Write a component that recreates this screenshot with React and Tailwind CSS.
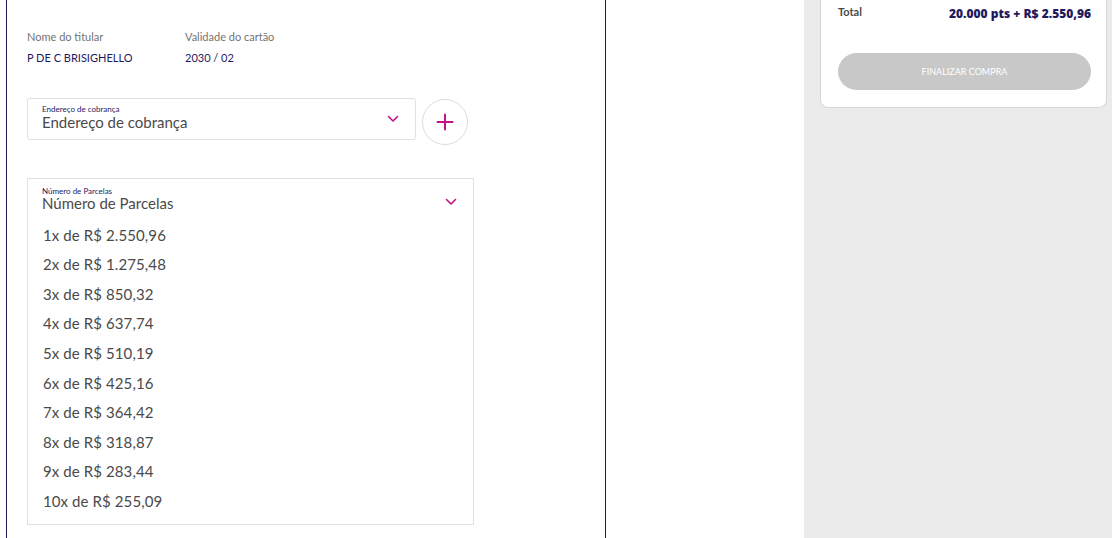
import React from 'react';

const parcelas = [
  '1x de R$ 2.550,96',
  '2x de R$ 1.275,48',
  '3x de R$ 850,32',
  '4x de R$ 637,74',
  '5x de R$ 510,19',
  '6x de R$ 425,16',
  '7x de R$ 364,42',
  '8x de R$ 318,87',
  '9x de R$ 283,44',
  '10x de R$ 255,09',
];

const Chevron = () => (
  <svg width="12" height="8" viewBox="0 0 12 8" fill="none">
    <path d="M1.5 1.5 L6 6 L10.5 1.5" stroke="#c2128a" strokeWidth="1.6" strokeLinecap="round" strokeLinejoin="round" />
  </svg>
);

const App = () => {
  return (
    <div className="flex h-[538px] w-[1112px] overflow-hidden bg-white font-['Lato','Open_Sans',sans-serif]">
      {/* Formulário de pagamento */}
      <div className="pl-[6px]">
        <div className="h-full w-[600px] border-x border-[#1e1a4d] pl-[20px] pt-[29px]">
          <div className="flex text-[11px] leading-[16px]">
            <div className="w-[158px]">
              <div className="text-[#737373]">Nome do titular</div>
              <div className="mt-[5px] text-[#1f1a5e]">P DE C BRISIGHELLO</div>
            </div>
            <div>
              <div className="text-[#737373]">Validade do cartão</div>
              <div className="mt-[5px] text-[#1f1a5e]">2030 / 02</div>
            </div>
          </div>

          <div className="mt-[32px] flex items-start gap-[6px]">
            <div className="flex h-[42px] w-[389px] items-center justify-between rounded-[3px] border border-[#e1e1e1] pl-[14px] pr-[16px]">
              <div className="-mt-[2px]">
                <div className="text-[8px] leading-[9px] text-[#1f1a5e]">Endereço de cobrança</div>
                <div className="text-[15px] leading-[17px] text-[#4a4a4a]">Endereço de cobrança</div>
              </div>
              <Chevron />
            </div>
            <div className="mt-[1px] flex h-[46px] w-[46px] items-center justify-center rounded-full border border-[#dcdcdc]">
              <svg width="18" height="18" viewBox="0 0 18 18">
                <path d="M9 1.5 V16.5 M1.5 9 H16.5" stroke="#c2128a" strokeWidth="2" strokeLinecap="round" />
              </svg>
            </div>
          </div>

          <div className="mt-[33px] w-[447px] border border-[#e1e1e1] pb-[8px]">
            <div className="flex items-center justify-between pl-[14px] pr-[16px] pt-[8px]">
              <div>
                <div className="text-[8px] leading-[9px] text-[#1f1a5e]">Número de Parcelas</div>
                <div className="-mt-[1px] text-[15px] leading-[16px] text-[#4a4a4a]">Número de Parcelas</div>
              </div>
              <div className="mt-[6px]">
                <Chevron />
              </div>
            </div>
            <ul className="mt-[9px] pl-[15px]">
              {parcelas.map((p) => (
                <li key={p} className="flex h-[29.6px] items-center text-[15px] tracking-[0.1px] text-[#4a4a4a]">
                  {p}
                </li>
              ))}
            </ul>
          </div>
        </div>
      </div>

      <div className="flex-1" />

      {/* Resumo */}
      <div className="w-[308px] bg-[#ebebeb] pl-[16px]">
        <div className="w-[287px] rounded-b-[8px] border border-t-0 border-[#d6d6d6] bg-white pb-[17px] pl-[17px] pr-[15px] pt-[4px]">
          <div className="flex items-start justify-between">
            <span className="text-[11px] font-bold text-[#4a4a4a]">Total</span>
            <span className="pt-[1px] font-['Open_Sans',sans-serif] text-[12px] font-extrabold text-[#1f1a5e]">20.000 pts + R$ 2.550,96</span>
          </div>
          <button className="mt-[30px] h-[37px] w-full rounded-full bg-[#c8c8c8] text-[9px] text-white">
            FINALIZAR COMPRA
          </button>
        </div>
      </div>
    </div>
  );
};

export default App;
